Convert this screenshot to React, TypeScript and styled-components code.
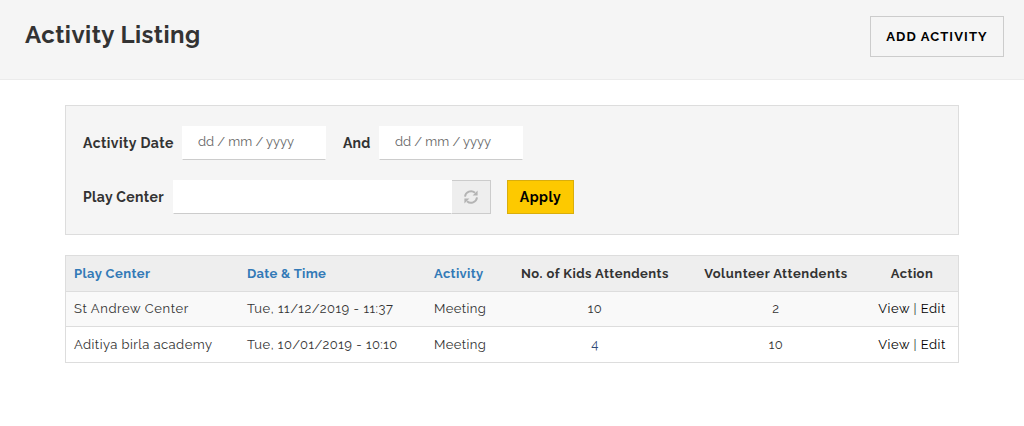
import React from "react";
import styled, { createGlobalStyle } from "styled-components";

const Global = createGlobalStyle`
  *, *::before, *::after { box-sizing: border-box; }
  body { margin: 0; background: #fff; color: #333; font: 13px/20px Raleway, Lato, sans-serif; }
  input, button { font-family: inherit; border-radius: 0; outline: none; }
`;

const Header = styled.header`
  display: flex;
  justify-content: space-between;
  align-items: flex-start;
  height: 80px;
  padding: 16px 20px 0 25px;
  background: #f5f5f5;
  border-bottom: 1px solid #ebebeb;
`;
const Title = styled.h1`
  margin: 3px 0 0;
  font-size: 24px;
  line-height: 32px;
  font-weight: 700;
  letter-spacing: 0.45px;
`;
const AddButton = styled.button`
  width: 134px;
  height: 41px;
  padding: 0;
  border: 1px solid #ccc;
  background: #f5f5f5;
  color: #000;
  font-size: 13px;
  font-weight: 700;
  letter-spacing: 1.1px;
`;
const Content = styled.main`
  width: 894px;
  margin: 25px 0 0 65px;
`;
const Filters = styled.form`
  display: flex;
  flex-direction: column;
  gap: 20px;
  height: 130px;
  padding: 20px 17px;
  border: 1px solid #ddd;
  background: #f5f5f5;
`;
const Row = styled.div`
  display: flex;
  height: 34px;
`;
const Label = styled.label<{ $w: number; $ls: number }>`
  width: ${(p) => p.$w}px;
  line-height: 34px;
  font-size: 14px;
  font-weight: 700;
  letter-spacing: ${(p) => p.$ls}px;
  white-space: nowrap;
`;
const Input = styled.input<{ $w: number }>`
  width: ${(p) => p.$w}px;
  height: 34px;
  padding: 0 15px 4px;
  border: 1px solid transparent;
  border-bottom-color: #ccc;
  background: #fff;
  font-size: 13px;
  &::placeholder { color: #666; opacity: 1; letter-spacing: -0.06px; }
`;
const DateInput = styled(Input)`
  margin-right: 17px;
`;
const Addon = styled.span`
  display: flex;
  align-items: center;
  justify-content: center;
  width: 39px;
  border: 1px solid #ccc;
  border-left: 0;
  background: #eee;
  color: #b4b4b4;
`;
const Apply = styled.button`
  width: 67px;
  margin-left: 16px;
  padding: 0;
  border: 1px solid #d9ae0c;
  background: #fdc900;
  color: #000;
  font-size: 14px;
  font-weight: 700;
  letter-spacing: 0.5px;
`;
const Table = styled.table`
  width: 894px;
  margin-top: 20px;
  table-layout: fixed;
  border-collapse: separate;
  border-spacing: 0;
  border: 1px solid #ddd;
  border-bottom: 0;
`;
const Tr = styled.tr<{ $h: number; $bg: string }>`
  height: ${(p) => p.$h}px;
  background: ${(p) => p.$bg};
`;
const Cell = styled.td<{ $center?: boolean }>`
  padding: ${(p) => (p.$center ? "0 7px 0 8px" : "0 8px")};
  border-bottom: 1px solid #ddd;
  text-align: ${(p) => (p.$center ? "center" : "left")};
  white-space: nowrap;
  letter-spacing: 0.5px;
`;
const Head = styled(Cell).attrs({ as: "th" })<{ $link?: boolean }>`
  color: ${(p) => (p.$link ? "#337ab7" : "#333")};
  font-weight: 700;
`;
const Text = styled.span<{ $ls: number; $color?: string }>`
  letter-spacing: ${(p) => p.$ls}px;
  color: ${(p) => p.$color ?? "inherit"};
`;
const Action = styled.a`
  color: #000;
`;

const RefreshIcon = () => (
  <svg width="14" height="14" viewBox="0 0 14 14" fill="none">
    <path d="M1 6.6A6 6 0 0 1 11 2.8M13 7.4A6 6 0 0 1 3 11.2" stroke="currentColor" strokeWidth="1.9" />
    <path d="M13.6 0.4V5.4H8.6zM0.4 13.6V8.6H5.4z" fill="currentColor" />
  </svg>
);

const columns = [
  { label: "Play Center", w: 173, link: true, ls: 0.45 },
  { label: "Date & Time", w: 187, link: true, ls: 0.32 },
  { label: "Activity", w: 77, link: true, ls: 0.35 },
  { label: "No. of Kids Attendents", w: 183, ls: 0.45 },
  { label: "Volunteer Attendents", w: 179, ls: 0.52 },
  { label: "Action", w: 93, ls: 0.4 },
];
const rows = [
  { center: "St Andrew Center", cls: 0.6, date: "Tue, 11/12/2019 - 11:37", dls: 0.52, kids: "10", kidsColor: "#333", volunteers: "2", h: 35, bg: "#f9f9f9" },
  { center: "Aditiya birla academy", cls: 0.44, date: "Tue, 10/01/2019 - 10:10", dls: 0.48, kids: "4", kidsColor: "#2f4a75", volunteers: "10", h: 36, bg: "#fff" },
];

export default function App() {
  return (
    <>
      <Global />
      <Header>
        <Title>Activity Listing</Title>
        <AddButton>ADD ACTIVITY</AddButton>
      </Header>
      <Content>
        <Filters>
          <Row>
            <Label $w={99} $ls={0.45}>Activity Date</Label>
            <DateInput $w={144} placeholder="dd / mm / yyyy" />
            <Label $w={36} $ls={0.2}>And</Label>
            <DateInput $w={144} placeholder="dd / mm / yyyy" />
          </Row>
          <Row>
            <Label $w={90} $ls={0.35}>Play Center</Label>
            <Input $w={279} />
            <Addon><RefreshIcon /></Addon>
            <Apply type="button">Apply</Apply>
          </Row>
        </Filters>
        <Table>
          <colgroup>
            {columns.map((c) => <col key={c.label} width={c.w} />)}
          </colgroup>
          <thead>
            <Tr $h={36} $bg="#eee">
              {columns.map((c, i) => (
                <Head key={c.label} $link={c.link} $center={i > 2}>
                  <Text $ls={c.ls}>{c.label}</Text>
                </Head>
              ))}
            </Tr>
          </thead>
          <tbody>
            {rows.map((r) => (
              <Tr key={r.center} $h={r.h} $bg={r.bg}>
                <Cell><Text $ls={r.cls}>{r.center}</Text></Cell>
                <Cell><Text $ls={r.dls}>{r.date}</Text></Cell>
                <Cell><Text $ls={0.4}>Meeting</Text></Cell>
                <Cell $center><Text $ls={0.4} $color={r.kidsColor}>{r.kids}</Text></Cell>
                <Cell $center>{r.volunteers}</Cell>
                <Cell $center><Action>View</Action> | <Action>Edit</Action></Cell>
              </Tr>
            ))}
          </tbody>
        </Table>
      </Content>
    </>
  );
}
